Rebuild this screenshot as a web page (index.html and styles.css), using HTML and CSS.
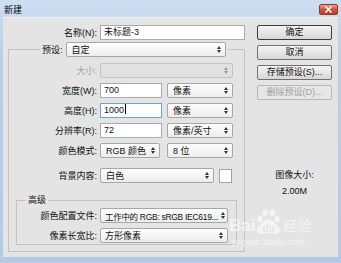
FILE: index.html
```html
<!DOCTYPE html>
<html lang="zh-CN">
<head>
    <meta charset="UTF-8">
    <title>新建</title>
    <link rel="stylesheet" href="styles.css">
</head>
<body>
    <div class="window">
        <div class="titlebar">
            <span class="title">新建</span>
            <span class="close">
                <svg width="9" height="7" viewBox="0 0 9 7"><path d="M1.5 0.5L7.5 6.5M7.5 0.5L1.5 6.5" stroke="#fff" stroke-width="1.6"/></svg>
            </span>
        </div>

        <div class="dialog">
            <div class="main">
                <div class="row">
                    <span class="lbl lbl-top">名称(N):</span>
                    <div class="input input-name">未标题-3</div>
                </div>

                <fieldset class="group">
                    <legend class="preset">
                        <span>预设:</span>
                        <div class="select select-preset">自定<svg class="arr" width="4" height="7" viewBox="0 0 4 7"><path d="M0 3L2 0L4 3ZM0 4L2 7L4 4Z"/></svg></div>
                    </legend>

                    <div class="row row-first">
                        <span class="lbl lbl-off">大小:</span>
                        <div class="select select-off"><svg class="arr" width="4" height="7" viewBox="0 0 4 7"><path d="M0 3L2 0L4 3ZM0 4L2 7L4 4Z"/></svg></div>
                    </div>
                    <div class="row">
                        <span class="lbl">宽度(W):</span>
                        <div class="input input-num">700</div>
                        <div class="select select-unit">像素<svg class="arr" width="4" height="7" viewBox="0 0 4 7"><path d="M0 3L2 0L4 3ZM0 4L2 7L4 4Z"/></svg></div>
                    </div>
                    <div class="row">
                        <span class="lbl">高度(H):</span>
                        <div class="input input-num focus">1000<span class="caret"></span></div>
                        <div class="select select-unit">像素<svg class="arr" width="4" height="7" viewBox="0 0 4 7"><path d="M0 3L2 0L4 3ZM0 4L2 7L4 4Z"/></svg></div>
                    </div>
                    <div class="row">
                        <span class="lbl">分辨率(R):</span>
                        <div class="input input-num">72</div>
                        <div class="select select-unit">像素/英寸<svg class="arr" width="4" height="7" viewBox="0 0 4 7"><path d="M0 3L2 0L4 3ZM0 4L2 7L4 4Z"/></svg></div>
                    </div>
                    <div class="row">
                        <span class="lbl">颜色模式:</span>
                        <div class="select select-mode">RGB 颜色<svg class="arr" width="4" height="7" viewBox="0 0 4 7"><path d="M0 3L2 0L4 3ZM0 4L2 7L4 4Z"/></svg></div>
                        <div class="select select-unit">8 位<svg class="arr" width="4" height="7" viewBox="0 0 4 7"><path d="M0 3L2 0L4 3ZM0 4L2 7L4 4Z"/></svg></div>
                    </div>
                    <div class="row row-bg">
                        <span class="lbl">背景内容:</span>
                        <div class="select select-bg">白色<svg class="arr" width="4" height="7" viewBox="0 0 4 7"><path d="M0 3L2 0L4 3ZM0 4L2 7L4 4Z"/></svg></div>
                        <div class="swatch"></div>
                    </div>

                    <fieldset class="group group-adv">
                        <legend class="adv-title">高级</legend>
                        <div class="row row-first-adv">
                            <span class="lbl lbl-adv">颜色配置文件:</span>
                            <div class="select select-adv"><span class="fit">工作中的 RGB: sRGB IEC619...</span><svg class="arr" width="4" height="7" viewBox="0 0 4 7"><path d="M0 3L2 0L4 3ZM0 4L2 7L4 4Z"/></svg></div>
                        </div>
                        <div class="row">
                            <span class="lbl lbl-adv">像素长宽比:</span>
                            <div class="select select-adv">方形像素<svg class="arr" width="4" height="7" viewBox="0 0 4 7"><path d="M0 3L2 0L4 3ZM0 4L2 7L4 4Z"/></svg></div>
                        </div>
                    </fieldset>
                </fieldset>
            </div>

            <div class="side">
                <div class="btn btn-default">确定</div>
                <div class="btn">取消</div>
                <div class="btn">存储预设(S)...</div>
                <div class="btn btn-off">删除预设(D)...</div>
                <div class="img-size">
                    <div>图像大小:</div>
                    <div>2.00M</div>
                </div>
            </div>
        </div>

        <div class="watermark">
            <div class="wm-logo">
                <span class="wm-bai">Bai</span>
                <svg width="28" height="26" viewBox="0 0 28 26">
                    <ellipse cx="6" cy="10" rx="2.6" ry="3.2"/>
                    <ellipse cx="11" cy="4" rx="2.8" ry="3.4"/>
                    <ellipse cx="18" cy="4" rx="2.8" ry="3.4"/>
                    <ellipse cx="23" cy="10" rx="2.6" ry="3.2"/>
                    <path d="M14.5 10C10 10 8 15 4 18C1 21 3 25.5 8 25C11 24.7 12 24 14.5 24C17 24 18 24.7 21 25C26 25.5 28 21 25 18C21 15 19 10 14.5 10Z"/>
                    <text x="14.5" y="22.5" text-anchor="middle" class="wm-du">du</text>
                </svg>
                <span class="wm-jy">经验</span>
            </div>
            <div class="wm-url">jingyan.baidu.com</div>
        </div>
    </div>
</body>
</html>
```

FILE: styles.css
```css
/* Base */
* {
    margin: 0;
    padding: 0;
    box-sizing: border-box;
}

body {
    margin: 0;
    width: 341px;
    height: 263px;
    overflow: hidden;
    font-family: "Liberation Sans", "Noto Sans CJK SC", sans-serif;
    font-size: 9px;
    color: #111;
}

/* Window frame */
.window {
    position: relative;
    width: 341px;
    height: 263px;
    display: flex;
    flex-direction: column;
    padding: 0 3px 6px;
    background: linear-gradient(#cfdff2, #bccfe7 20%, #b4c9e3);
}

.titlebar {
    height: 17px;
    display: flex;
    justify-content: space-between;
    align-items: flex-start;
}

.title {
    font-size: 9px;
    line-height: 11px;
    padding: 5px 0 0 1px;
    color: #000;
}

.close {
    width: 19px;
    height: 11px;
    margin-top: 4px;
    display: flex;
    align-items: center;
    justify-content: center;
    border: 1px solid #8e3b34;
    border-radius: 2px;
    background: linear-gradient(#e9a08f, #d0533f 50%, #c23a28);
}

/* Dialog body */
.dialog {
    flex: 1;
    display: flex;
    background-color: #e4e4e4;
    border-top: 1px solid #f2f2f2;
}

.main {
    width: 242px;
    padding-top: 7px;
}

.row {
    display: flex;
    align-items: center;
    gap: 3px;
    height: 15px;
}

.row + .row {
    margin-top: 5px;
}

.lbl {
    width: 88px;
    text-align: right;
    white-space: nowrap;
}

.lbl-top {
    width: 94px;
}

.lbl-off {
    color: #a3a3a3;
}

.lbl-adv {
    width: 80px;
}

/* Controls */
.input {
    height: 15px;
    padding-left: 3px;
    line-height: 13px;
    background-color: #fff;
    border: 1px solid #a9abb2;
    white-space: nowrap;
}

.input-name {
    width: 145px;
}

.input-num {
    width: 62px;
    margin-right: 2px;
}

.input.focus {
    border-color: #6fa3d6;
}

.caret {
    display: inline-block;
    width: 1px;
    height: 10px;
    margin-left: 1px;
    vertical-align: -1px;
    background-color: #000;
}

.select {
    height: 15px;
    display: flex;
    align-items: center;
    padding: 0 4px 0 5px;
    border: 1px solid #a7a7a7;
    border-radius: 2px;
    background: linear-gradient(#fdfdfd, #ededed);
    white-space: nowrap;
}

.arr {
    margin-left: auto;
    flex-shrink: 0;
    fill: #333;
}

.select-preset {
    width: 160px;
}

.select-off {
    width: 133px;
    background: #e1e1e1;
    border-color: #c3c3c3;
}

.select-off .arr {
    fill: #9a9a9a;
}

.select-unit {
    width: 66px;
}

.select-mode {
    width: 60px;
    margin-right: 4px;
}

.select-bg {
    width: 114px;
}

.select-adv {
    width: 128px;
    padding-left: 4px;
}

.fit {
    font-size: 8.5px;
    letter-spacing: -0.3px;
    margin-right: 3px;
}

.swatch {
    width: 13px;
    height: 14px;
    margin-left: 2px;
    background-color: #fff;
    border: 1px solid #a0a0a0;
}

/* Group boxes */
.group {
    min-width: 0;
    width: 237px;
    margin: 2px 0 0 5px;
    padding: 0;
    border: 1px solid #c3c3c3;
}

.preset {
    display: flex;
    align-items: center;
    gap: 3px;
    height: 15px;
    margin-left: 31px;
    padding: 0 2px;
}

.row-first {
    margin-top: 6px;
}

.row-bg.row {
    margin-top: 10px;
}

.group-adv {
    width: 221px;
    margin: 11px 0 6px 7px;
    padding-bottom: 1px;
}

.adv-title {
    margin-left: 9px;
    padding: 0 2px;
    line-height: 12px;
}

.row-first-adv {
    margin-top: 2px;
}

/* Right column */
.side {
    flex: 1;
    padding: 7px 0 0 12px;
}

.btn {
    width: 75px;
    height: 15px;
    line-height: 13px;
    text-align: center;
    border: 1px solid #707070;
    border-radius: 2px;
    background: linear-gradient(#f4f4f4, #e6e6e6 50%, #d7d7d7);
    margin-bottom: 5px;
    white-space: nowrap;
}

.btn-default {
    border-color: #3c3c3c;
}

.btn-off {
    color: #a0a0a0;
    border-color: #b8b8b8;
    background: #e6e6e6;
}

.img-size {
    width: 75px;
    margin-top: 67px;
    text-align: center;
    line-height: 16px;
}

/* Watermark */
.watermark {
    position: absolute;
    left: 229px;
    top: 209px;
    color: rgba(255, 255, 255, 0.6);
}

.wm-logo {
    display: flex;
    align-items: flex-end;
}

.wm-logo svg {
    fill: rgba(255, 255, 255, 0.6);
    margin: 0 1px 0 -1px;
}

.wm-bai {
    font-size: 17px;
    font-weight: bold;
    line-height: 18px;
}

.wm-du {
    font-family: "Liberation Sans", sans-serif;
    font-size: 10px;
    font-weight: bold;
    fill: #e4e4e4;
}

.wm-jy {
    font-size: 14px;
    line-height: 17px;
}

.wm-url {
    font-size: 9px;
    line-height: 10px;
    margin: 2px 0 0 3px;
}
```
